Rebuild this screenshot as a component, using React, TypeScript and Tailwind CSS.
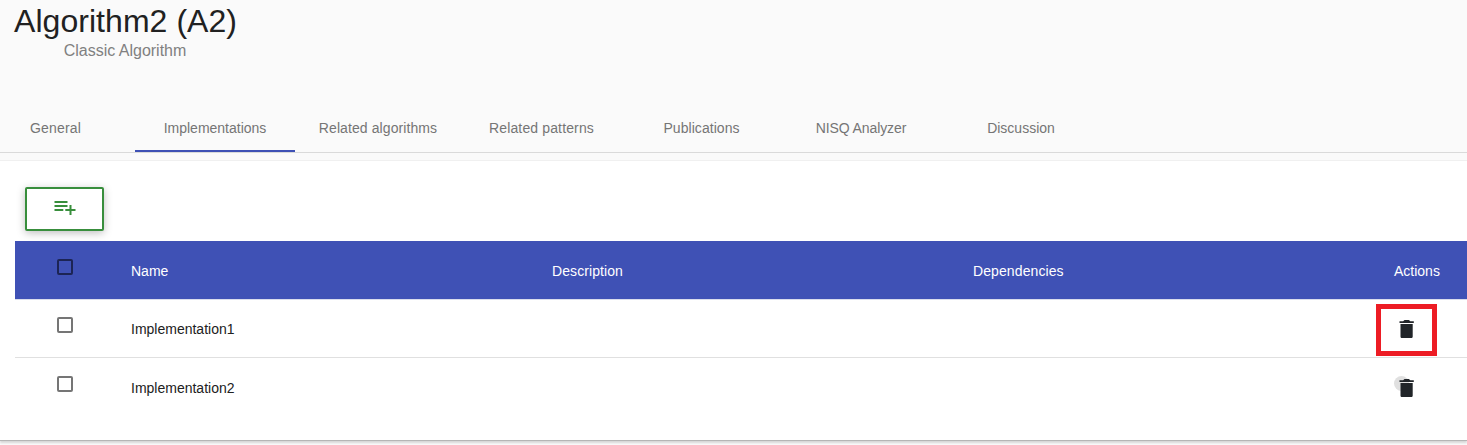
const tabs = [
  { label: 'General', size: 'w-[159px] tracking-[0.2px]' },
  { label: 'Implementations', size: 'w-[160px]', active: true },
  { label: 'Related algorithms', size: 'w-[166px] tracking-[0.09px]' },
  { label: 'Related patterns', size: 'w-[161px] tracking-[0.14px]' },
  { label: 'Publications', size: 'w-[159px] tracking-[0.05px]' },
  { label: 'NISQ Analyzer', size: 'w-[160px] tracking-[-0.1px]' },
  { label: 'Discussion', size: 'w-[160px]' },
];

const rows = [
  { name: 'Implementation1', highlighted: true },
  { name: 'Implementation2', ripple: true },
];

const columns = 'grid grid-cols-[116px_421px_421px_421px_1fr]';

function Checkbox({ tone }: { tone: string }) {
  return <span role="checkbox" aria-checked="false" className={`block size-4 rounded-[2px] border-2 ${tone}`} />;
}

function TrashIcon() {
  return (
    <svg viewBox="0 0 24 24" className="relative size-6 fill-[#212529]">
      <path d="M5.5 7h12.2v12.4c0 1-.7 1.6-1.6 1.6H7.1c-.9 0-1.6-.6-1.6-1.6V7zM4.5 4.2h3.6l1.4-1.2h4.4l1.4 1.2h3.5V6H4.5V4.2z" />
    </svg>
  );
}

function AddToListIcon() {
  return (
    <svg viewBox="0 0 24 24" className="size-6 fill-[#388e3c]">
      <path d="M1.5 6h13v2h-13V6zm0 4h13v2h-13v-2zm0 4h8.8v2H1.5v-2zM16.5 10h2v4h4v2h-4v4h-2v-4h-4.2v-2h4.2v-4z" />
    </svg>
  );
}

export default function App() {
  return (
    <div className="flex h-[445px] w-full flex-col overflow-hidden bg-[#fafafa] font-['Liberation_Sans',Arial,sans-serif] text-sm text-[#212121]">
      <header className="h-[104px] shrink-0 pl-3.5">
        <div className="flex w-[223px] flex-col items-center whitespace-nowrap">
          <h1 className="text-[32px] leading-[42px] tracking-[0.05px]">Algorithm2 (A2)</h1>
          <p className="pr-px text-base leading-[18px] text-[#808080]">Classic Algorithm</p>
        </div>
      </header>

      <nav className="-ml-6 flex h-[49px] shrink-0 border-b border-[#dadada]">
        {tabs.map((tab) => (
          <button
            key={tab.label}
            className={`${tab.size} h-12 shrink-0 border-b-2 pt-0.5 text-[#757575] ${tab.active ? 'border-[#3f51b5]' : 'border-transparent'}`}
          >
            {tab.label}
          </button>
        ))}
      </nav>

      <main className="mt-[7px] flex h-[281px] shrink-0 flex-col border-t border-b border-t-[#f0f0f0] border-b-[#b5b5b5] bg-white pl-[15px] shadow-[0_2px_2px_rgba(0,0,0,0.14)]">
        <button className="mt-[26px] ml-2.5 flex h-11 w-[79px] shrink-0 items-center justify-center rounded-[2px] border-2 border-[#388e3c] bg-white pb-1 shadow-[0_2px_8px_rgba(0,0,0,0.26)]">
          <AddToListIcon />
        </button>

        <section className="mt-2.5">
          <div className={`${columns} h-[59px] items-center border-b border-[#d9dcec] bg-[#3f51b5] text-white`}>
            <div className="-mt-1.5 pl-[42px]">
              <Checkbox tone="border-[#1c2454]" />
            </div>
            <span className="pt-0.5">Name</span>
            <span className="pt-0.5 tracking-[0.08px]">Description</span>
            <span className="pt-0.5 tracking-[0.1px]">Dependencies</span>
            <span className="pt-0.5">Actions</span>
          </div>
          {rows.map((row) => (
            <div key={row.name} className={`${columns} items-center ${row.highlighted ? 'h-[58px] border-b border-[#e0e0e0]' : 'h-[60px]'}`}>
              <div className="-mt-2 pl-[42px]">
                <Checkbox tone="border-[#757575]" />
              </div>
              <span>{row.name}</span>
              <span />
              <span />
              <div className={`relative -ml-[18px] flex h-[52px] w-[61px] items-center justify-center ${row.highlighted ? 'mt-0.5 border-[5px] border-[#ed1c24] pb-0.5' : ''}`}>
                {row.ripple && <span className="absolute top-3.5 left-[18px] size-[15px] rounded-full bg-[#e0e0e0]" />}
                <TrashIcon />
              </div>
            </div>
          ))}
        </section>
      </main>
    </div>
  );
}
